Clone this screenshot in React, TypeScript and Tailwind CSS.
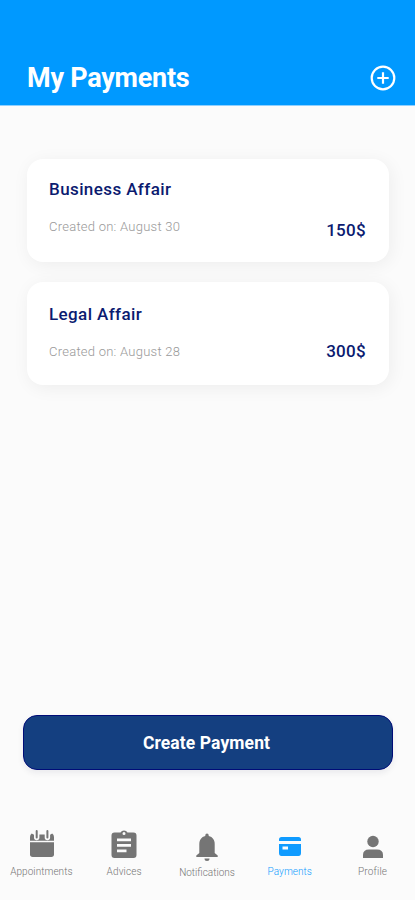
import type { ReactNode } from 'react';

interface Payment {
  title: string;
  date: string;
  amount: string;
}

const payments: Payment[] = [
  { title: 'Business Affair', date: 'August 30', amount: '150$' },
  { title: 'Legal Affair', date: 'August 28', amount: '300$' },
];

export default function App() {
  return (
    <div className="flex h-[900px] w-[415px] flex-col overflow-hidden bg-[#fbfbfb] font-[Roboto,sans-serif]">
      {/* Header */}
      <header className="flex h-[106px] shrink-0 items-end justify-between border-b border-[#8fd0ff] bg-[#0099ff] pr-[19px] pb-[11px] pl-[27px] text-white">
        <h1 className="text-[27px] leading-[32px] font-bold tracking-[-0.25px]">My Payments</h1>
        <button aria-label="Add payment" className="mb-[3px]">
          <svg className="h-[26px] w-[26px]" viewBox="0 0 26 26" fill="none" stroke="currentColor" strokeWidth={2.2}>
            <circle cx="13" cy="13" r="11.3" />
            <path d="M13 7.3v11.4M7.3 13h11.4" />
          </svg>
        </button>
      </header>

      {/* Payments */}
      <main className="flex grow flex-col gap-5 pt-[53px] pr-[26px] pl-[27px]">
        {payments.map((payment, i) => (
          <PaymentCard key={payment.title} payment={payment} raised={i > 0} />
        ))}
      </main>

      <button className="mr-[22px] mb-[50px] ml-[23px] h-[55px] shrink-0 rounded-[14px] border border-[#000c78] bg-[#143f80] pt-px pr-[3px] text-[17.5px] font-bold tracking-[0.1px] text-white shadow-[0_3px_6px_rgba(0,0,60,0.07)]">
        Create Payment
      </button>

      {/* Bottom navigation */}
      <nav className="flex h-[80px] shrink-0 pt-[8px] pr-px">
        <NavItem label="Appointments" labelClass="tracking-[0.05px]">
          <g transform="translate(.7 0)">
            <path d="M3.300 9Q3.300 6.500 5 5.500l2.300 1.300v2.700a2.700 2.700 0 0 0 5.400 0V6.500H18v3a2.700 2.700 0 0 0 5.400 0V6.800l2.100-1.300Q27.300 6.500 27.300 9v3.800h-24z" />
            <path d="M10 3v6.500M20.700 3v6.500" stroke="currentColor" strokeWidth={2} strokeLinecap="round" />
            <path d="M3.300 14.300h24v12q0 2.700-2.700 2.700H6q-2.700 0-2.700-2.700z" />
          </g>
        </NavItem>
        <NavItem label="Advices" labelClass="tracking-[0.15px]">
          <path
            fillRule="evenodd"
            d="M5.500 4.500h6a4 4 0 0 1 7 0h6q3 0 3 3v19.500q0 3-3 3h-19q-3 0-3-3V7.500q0-3 3-3zM15 4a1.500 1.500 0 1 0 0 3 1.500 1.500 0 0 0 0-3zM8 10.500v2.700h14v-2.700zM8 16v2.700h14V16zM8 21.500v2.700h9.500v-2.700z"
          />
        </NavItem>
        <NavItem label="Notifications" labelClass="translate-y-px">
          <path d="M13.300 8V7.200a1.700 1.700 0 0 1 3.400 0V8c4 1 6 4 6 8v9l3 2.500V29H4.300v-1.500l3-2.500v-9c0-4 2-7 6-8z" />
          <path d="M12.500 30.500h5a2.500 2.500 0 0 1-5 0z" />
        </NavItem>
        <NavItem label="Payments" active labelClass="tracking-[0.05px]">
          <path d="M6.500 9h17q2.500 0 2.500 2.500V13H4v-1.500Q4 9 6.500 9z" />
          <path
            fillRule="evenodd"
            d="M4 16h22v9q0 3-2.500 3h-17Q4 28 4 25zM7.500 18.500v3H13v-3z"
          />
        </NavItem>
        <NavItem label="Profile" labelClass="tracking-[0.15px]">
          <circle cx="15" cy="13.500" r="5.700" />
          <path d="M5 30v-3q0-5.500 6-5.500h8q6 0 6 5.500v3z" />
        </NavItem>
      </nav>
    </div>
  );
}

function PaymentCard({ payment, raised }: { payment: Payment; raised: boolean }) {
  return (
    <section className="flex h-[103px] shrink-0 justify-between rounded-2xl bg-white px-[22px] shadow-[2px_3px_18px_rgba(0,0,0,0.06)]">
      <div className={raised ? 'pt-[22px]' : 'pt-[20px]'}>
        <h2 className="text-[17px] leading-[20px] font-medium tracking-[0.4px] text-[#0b1b70]">{payment.title}</h2>
        <p className="mt-[20px] text-[13px] leading-[16px] font-light tracking-[0.250px] text-[#999]">
          Created on: {payment.date}
        </p>
      </div>
      <span
        className={`mr-px self-end text-[17px] leading-[20px] font-medium tracking-[0.3px] text-[#0b1b70] ${
          raised ? 'pb-[24px]' : 'pb-[22px]'
        }`}
      >
        {payment.amount}
      </span>
    </section>
  );
}

interface NavItemProps {
  label: string;
  labelClass?: string;
  active?: boolean;
  children: ReactNode;
}

function NavItem({ label, labelClass = '', active = false, children }: NavItemProps) {
  return (
    <button className={`flex flex-1 flex-col items-center ${active ? 'text-[#0f9bff]' : 'text-[#757575]'}`}>
      <svg className="h-[34px] w-[30px]" viewBox="0 0 30 34" fill="currentColor">
        {children}
      </svg>
      <span className={`mt-[4px] text-[10px] leading-[12px] font-light ${labelClass}`}>{label}</span>
    </button>
  );
}
